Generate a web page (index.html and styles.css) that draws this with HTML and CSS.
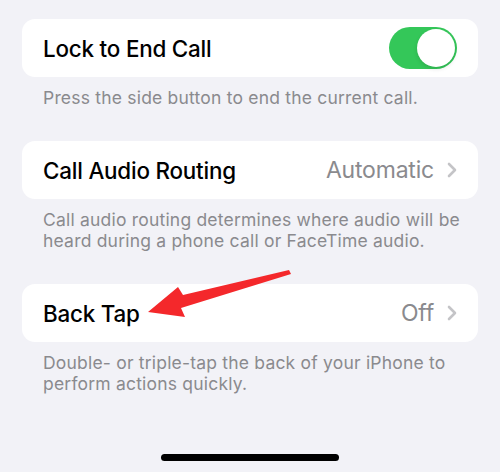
FILE: index.html
```html
<!DOCTYPE html>
<html>
<head>
<meta charset="utf-8">
<link rel="stylesheet" href="styles.css">
</head>
<body>
<div class="screen">
  <div class="group">
    <div class="card">
      <span class="label">Lock to End Call</span>
      <span class="toggle"><span class="knob"></span></span>
    </div>
    <p class="footer">Press the side button to end the current call.</p>
  </div>
  <div class="group">
    <div class="card">
      <span class="label">Call Audio Routing</span>
      <span class="value">Automatic<svg class="chev" viewBox="0 0 10 16" width="10" height="16"><path d="M2 2 L8 8 L2 14" fill="none" stroke="#c4c4c7" stroke-width="2.6" stroke-linecap="round" stroke-linejoin="round"/></svg></span>
    </div>
    <p class="footer">Call audio routing determines where audio will be heard during a phone call or FaceTime audio.</p>
  </div>
  <div class="group">
    <div class="card">
      <span class="label">Back Tap</span>
      <span class="value">Off<svg class="chev" viewBox="0 0 10 16" width="10" height="16"><path d="M2 2 L8 8 L2 14" fill="none" stroke="#c4c4c7" stroke-width="2.6" stroke-linecap="round" stroke-linejoin="round"/></svg></span>
    </div>
    <p class="footer">Double- or triple-tap the back of your iPhone to perform actions quickly.</p>
  </div>
  <div class="home"></div>
  <svg class="arrow" viewBox="0 0 500 472" width="500" height="472">
    <polygon points="148,312 178,287 183,295 289,270 291,274 181,308 185,317" fill="#f4282b"/>
  </svg>
</div>
</body>
</html>
```
FILE: styles.css
```css
* { box-sizing: border-box; }
html, body { margin: 0; padding: 0; }
body {
  background: #f2f2f7;
  font-family: Inter, "Noto Sans", sans-serif;
  -webkit-font-smoothing: antialiased;
}
.screen {
  position: relative;
  width: 500px;
  height: 472px;
  overflow: hidden;
  display: flex;
  flex-direction: column;
  padding: 19px 22px 0 22px;
}
.group { margin-bottom: 33px; }
.card {
  background: #ffffff;
  border-radius: 13px;
  height: 58px;
  padding: 0 21px;
  display: flex;
  align-items: center;
  justify-content: space-between;
}
.label {
  font-size: 22.4px;
  font-weight: 500;
  color: #000;
  letter-spacing: -0.2px;
}
.value {
  font-size: 23px;
  color: #8a8a8e;
  display: flex;
  align-items: center;
  gap: 13px;
  letter-spacing: -0.2px;
}
.chev { display: block; }
.toggle {
  width: 68px;
  height: 42px;
  border-radius: 21px;
  background: #34c759;
  display: flex;
  align-items: center;
  justify-content: flex-end;
  padding: 2px;
}
.knob {
  width: 38px;
  height: 38px;
  border-radius: 50%;
  background: #fff;
  box-shadow: 0 2px 4px rgba(0,0,0,0.12);
}
.footer {
  margin: 10px -18px 0 0;
  padding: 0 0 0 21px;
  font-size: 17.5px;
  line-height: 21px;
  letter-spacing: 0.2px;
  color: #8a8a8e;
}
.home {
  margin-top: auto;
  margin-bottom: 11px;
  align-self: center;
  width: 178px;
  height: 7px;
  border-radius: 4px;
  background: #000;
}
.arrow {
  position: absolute;
  left: 0;
  top: 0;
}
```
